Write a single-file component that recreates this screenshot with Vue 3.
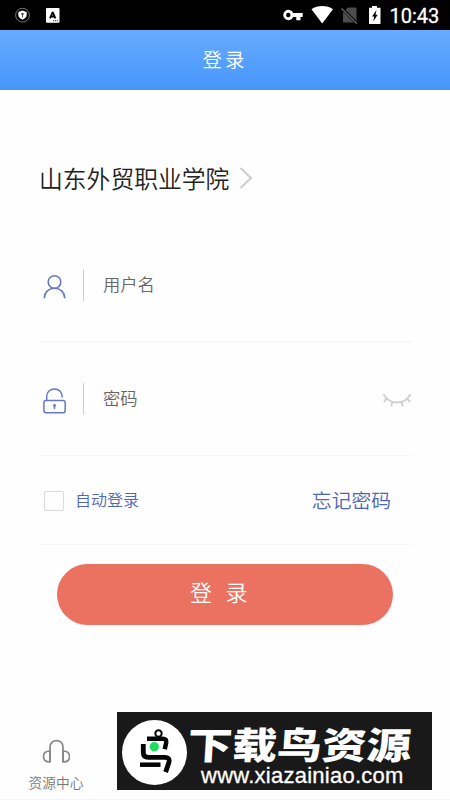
<template>
    <div class="page">
        <div class="status-bar">
            <svg class="status-left" width="70" height="30" viewBox="0 0 70 30">
                <circle cx="22.5" cy="15.2" r="6.9" fill="none" stroke="#777" stroke-width="1"/>
                <path d="M22.5 10.6l4.2 1.5v3c0 2.3-1.8 3.7-4.2 4.7-2.4-1-4.2-2.4-4.2-4.7v-3z" fill="#fff"/>
                <circle cx="22.5" cy="14" r="1.3" fill="#555"/>
                <path d="M22.5 14.5v3" stroke="#555" stroke-width="1"/>
                <rect x="46" y="8" width="13.5" height="14.7" rx="1" fill="#fff"/>
                <path d="M50 18.3l2.7-6.3L55.400 18.300M51 16.500h3.500" fill="none" stroke="#000" stroke-width="1.800" stroke-linejoin="bevel"/>
                <path d="M53 20.700h5" stroke="#333" stroke-width="1" stroke-dasharray="1.200 .7"/>
            </svg>
            <svg class="status-right" width="104" height="30" viewBox="282 0 104 30">
                <path d="M293.200 12.900a5.200 5.200 0 1 0 0 4.200h3.100v3.100h4.200v-3.100h2.200v-4.200zM288.300 17.200a2.200 2.200 0 1 1 0-4.400 2.200 2.200 0 0 1 0 4.400z" fill="#fff"/>
                <path d="M311.500 9.300c6-4.400 15.500-4.400 21.500 0L322.200 23.500z" fill="#fff"/>
                <path d="M348 7.500h8.500v15h-13.500v-10z" fill="#4c4c4c"/>
                <path d="M342 8.500l15 15" stroke="#000" stroke-width="3"/>
                <path d="M341.500 8.500l15.500 15.300" stroke="#666" stroke-width="1.300"/>
                <path d="M372 6h5v1.700h3.500v16.300h-11.500v-16.300h3z" fill="#fff"/>
                <path d="M376.500 10l-4.500 6.500h2.200l-1 5 4.500-6.800h-2.200l1-4.700z" fill="#000"/>
            </svg>
            <span class="clock">10:43</span>
        </div>
        <header class="nav-bar">登录</header>

        <main class="login">
            <div class="school">
                <span>{{ school }}</span>
                <svg width="14" height="24" viewBox="0 0 14 24"><path d="M1.500 2l10.500 10-10.500 10" fill="none" stroke="#cecece" stroke-width="2"/></svg>
            </div>

            <div class="field user">
                <svg class="field-icon" width="24" height="28" viewBox="0 0 24 28">
                    <g fill="none" stroke="#6478bf" stroke-width="1.600" stroke-linecap="round">
                        <circle cx="11.500" cy="9" r="6.300"/>
                        <path d="M1.300 24.800c.3-5.600 4.500-9.500 10.200-9.500s9.900 3.900 10.200 9.500"/>
                    </g>
                </svg>
                <i class="divider"></i>
                <span class="placeholder">用户名</span>
            </div>

            <div class="field password">
                <svg class="field-icon" width="24" height="28" viewBox="0 0 24 28">
                    <g fill="none" stroke="#6478bf" stroke-width="1.500" stroke-linecap="round">
                        <rect x=".9" y="13.400" width="21.300" height="12.300" rx="2.200"/>
                        <path d="M3.700 13.400V9.500c0-4.300 3.400-7.600 7.800-7.600 4.200 0 7.600 3 7.700 8"/>
                        <path d="M11.500 19v2.500"/>
                    </g>
                    <circle cx="11.500" cy="18.400" r="1.400" fill="#6478bf"/>
                </svg>
                <i class="divider"></i>
                <span class="placeholder">密码</span>
                <svg class="eye" width="30" height="16" viewBox="0 0 30 16">
                    <path d="M1.500 2.200c5.500 11 21.500 11 27 0M4.700 6.300l-2.700 3.700M10.300 9.700l-1 4.700M19.500 9.700l1.200 4.700M25 6.300l3 3.700" fill="none" stroke="#cfcfcf" stroke-width="1.900"/>
                </svg>
            </div>

            <div class="options">
                <span class="checkbox"></span>
                <span class="auto">自动登录</span>
                <span class="forgot">忘记密码</span>
            </div>

            <button class="submit">登录</button>
        </main>

        <footer class="bottom">
            <div class="resource">
                <svg width="28" height="26" viewBox="0 0 28 26">
                    <g fill="none" stroke="#868686" stroke-width="1.700" stroke-linejoin="round">
                        <path d="M8 23V8.300c0-9 13-9 13 0V23"/>
                        <path d="M8 12c-4.200 0-6.500 2.400-6.500 5.500S3.800 23 8 23z"/>
                        <path d="M21 12c4.200 0 6.500 2.400 6.500 5.500S25.200 23 21 23z"/>
                    </g>
                </svg>
                <span>资源中心</span>
            </div>
            <div class="banner">
                <svg class="bird" width="66" height="66" viewBox="0 0 66 66">
                    <circle cx="33.500" cy="32.500" r="32.500" fill="#fff"/>
                    <g fill="none" stroke="#050505">
                        <circle cx="37.500" cy="13.500" r="3.200" stroke-width="2"/>
                        <path d="M26 18.800h15.500c3.300 0 4.200 1.200 3.700 4l-1.500 6.500" stroke-width="4.500"/>
                        <path d="M22.300 24v8.500q0 4.800 5 4.800h16.500c4 0 5 2 4 5.500l-3.200 9.300" stroke-width="4.800"/>
                        <path d="M19 44.700h20.500" stroke-width="4.500"/>
                    </g>
                    <circle cx="33.300" cy="26.800" r="4.700" fill="#20dc5e"/>
                </svg>
                <div class="banner-text">
                    <strong>下载鸟资源</strong>
                    <span>www.xiazainiao.com</span>
                </div>
            </div>
        </footer>
    </div>
</template>

<script setup>
import { ref } from 'vue'

const school = ref('山东外贸职业学院')
</script>

<style>
body {
    margin: 0;
    background: #fefefe;
}
</style>

<style scoped>
.page {
    display: flex;
    flex-direction: column;
    width: 450px;
    height: 800px;
    overflow: hidden;
    background: #fefefe;
    font-family: "Noto Sans CJK SC", sans-serif;
    font-weight: 350;
    white-space: nowrap;
}
svg {
    display: block;
    flex: none;
}
.status-bar {
    display: flex;
    align-items: center;
    height: 30px;
    background: #000;
}
.status-right {
    margin-left: 212px;
}
.clock {
    margin: 1px 0 0 3.5px;
    color: #fff;
    font: 20px/30px Roboto, sans-serif;
    -webkit-text-stroke: .3px #fff;
}
.nav-bar {
    height: 60px;
    box-sizing: border-box;
    background: linear-gradient(#68abff, #4596fb);
    color: #fff;
    font-size: 19.5px;
    line-height: 58px;
    letter-spacing: 3px;
    text-align: center;
}
.login {
    width: 372px;
    margin-left: 40px;
    padding-top: 68px;
}
.school {
    display: flex;
    align-items: center;
    gap: 10px;
    height: 40px;
    color: #222;
    font-size: 23.8px;
    line-height: 39px;
}
.school span {
    margin: -1px 0 0 -1px;
}
.field {
    display: flex;
    box-sizing: border-box;
    border-bottom: 1px solid #f5f5f5;
}
.user {
    height: 114px;
    margin-top: 30px;
    padding-top: 41px;
}
.user .field-icon {
    margin-top: 4px;
}
.password {
    height: 114px;
    padding-top: 41px;
}
.field-icon {
    margin: 4px 0 0 3px;
}
.divider {
    width: 1px;
    height: 32px;
    margin-left: 15px;
    border-right: 1px solid #cfcfcf;
}
.placeholder {
    margin-left: 19px;
    color: #666;
    font-size: 17.3px;
    line-height: 30px;
}
.eye {
    margin: 9px 0 0 auto;
}
.options {
    display: flex;
    box-sizing: border-box;
    height: 89px;
    padding-top: 29px;
    border-bottom: 1px solid #f5f5f5;
    color: #5066b4;
    line-height: 30px;
}
.checkbox {
    box-sizing: border-box;
    width: 20px;
    height: 20px;
    margin: 6px 0 0 4px;
    border: 1.5px solid #d9d9d9;
    border-radius: 2px;
}
.auto {
    margin-left: 11px;
    font-size: 16px;
    line-height: 28px;
}
.forgot {
    margin: 0 21px 0 auto;
    font-size: 19.8px;
}
.submit {
    display: block;
    width: 336px;
    height: 61px;
    margin: 19px 0 0 17px;
    padding: 0 0 6px 1px;
    border: 0;
    border-radius: 31px;
    background: #eb7161;
    color: #fff;
    font: 350 22px/55px "Noto Sans CJK SC", sans-serif;
    letter-spacing: 13.5px;
    text-align: center;
}
.bottom {
    display: flex;
    box-sizing: border-box;
    height: 88px;
    margin-top: auto;
    border-bottom: 1px solid #f5f5f5;
}
.resource {
    display: flex;
    flex-direction: column;
    align-items: center;
    width: 88px;
    padding: 27px 0 0 12px;
    color: #777;
    font-size: 13.7px;
    line-height: 20px;
}
.resource span {
    margin-top: 7px;
}
.banner {
    display: flex;
    width: 315px;
    height: 78px;
    margin-left: 17px;
    overflow: hidden;
    background: #191919;
    color: #fff;
}
.bird {
    margin: 8px 0 0 4px;
}
.banner-text {
    display: flex;
    flex-direction: column;
    margin-left: 1px;
}
.banner-text strong {
    height: 51px;
    font-size: 37px;
    font-weight: 900;
    line-height: 62px;
    transform: scaleX(1.21) skewX(-3deg);
    transform-origin: left center;
}
.banner-text span {
    margin-left: 13px;
    font: 22px/25px "Liberation Sans", sans-serif;
    letter-spacing: .25px;
    -webkit-text-stroke: .3px #fff;
}
</style>
